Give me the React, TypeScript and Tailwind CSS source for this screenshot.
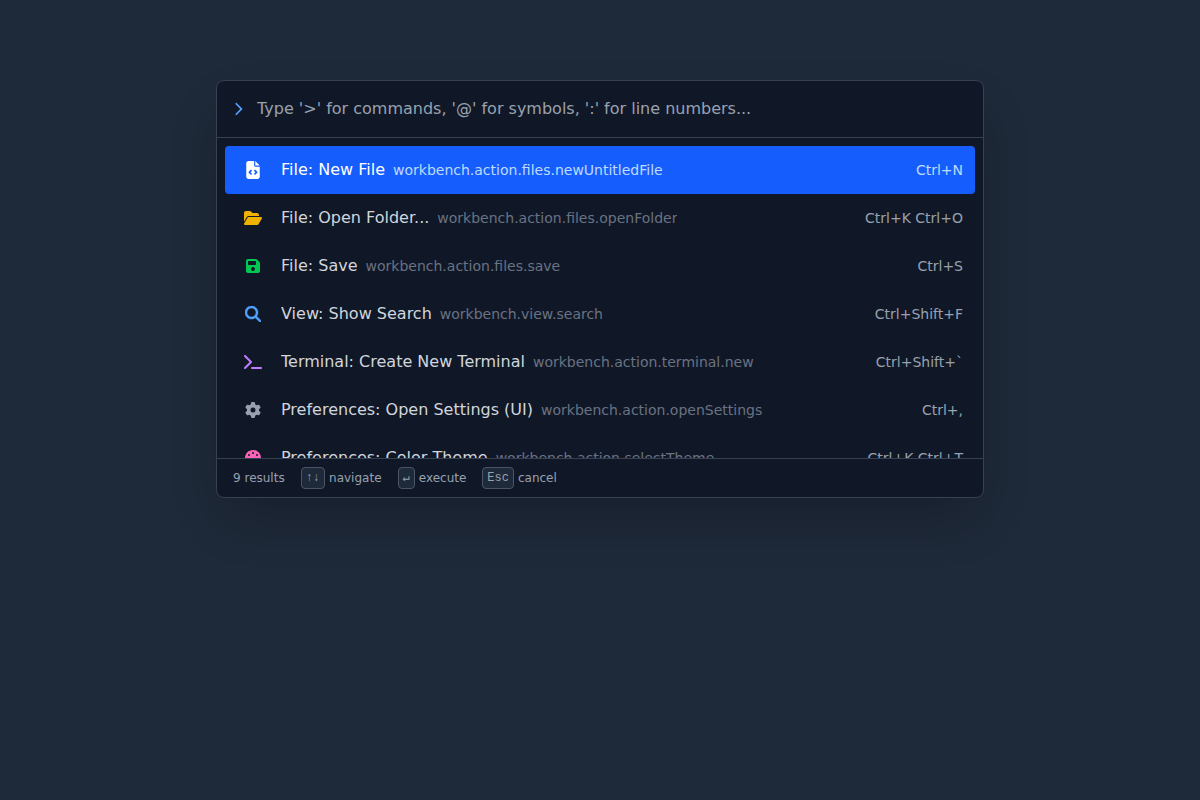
import { useState } from "react"
import type { IconType } from "react-icons"
import {
  FaBug,
  FaChevronRight,
  FaCodeBranch,
  FaFileCode,
  FaFloppyDisk,
  FaFolderOpen,
  FaGear,
  FaMagnifyingGlass,
  FaPalette,
  FaTerminal,
} from "react-icons/fa6"

interface Command {
  id: string
  title: string
  shortcut: string
  icon: IconType
  iconSize: string
  color: string
}

const commands: Command[] = [
  { id: "workbench.action.files.newUntitledFile", title: "File: New File", shortcut: "Ctrl+N", icon: FaFileCode, iconSize: "size-[18px]", color: "text-blue-400" },
  { id: "workbench.action.files.openFolder", title: "File: Open Folder...", shortcut: "Ctrl+K Ctrl+O", icon: FaFolderOpen, iconSize: "size-[18px]", color: "text-yellow-500" },
  { id: "workbench.action.files.save", title: "File: Save", shortcut: "Ctrl+S", icon: FaFloppyDisk, iconSize: "size-4", color: "text-green-500" },
  { id: "workbench.view.search", title: "View: Show Search", shortcut: "Ctrl+Shift+F", icon: FaMagnifyingGlass, iconSize: "size-4 stroke-[14]", color: "text-blue-400" },
  { id: "workbench.action.terminal.new", title: "Terminal: Create New Terminal", shortcut: "Ctrl+Shift+`", icon: FaTerminal, iconSize: "size-[18px]", color: "text-purple-400" },
  { id: "workbench.action.openSettings", title: "Preferences: Open Settings (UI)", shortcut: "Ctrl+,", icon: FaGear, iconSize: "size-4", color: "text-gray-400" },
  { id: "workbench.action.selectTheme", title: "Preferences: Color Theme", shortcut: "Ctrl+K Ctrl+T", icon: FaPalette, iconSize: "size-4", color: "text-pink-400" },
  { id: "workbench.view.scm", title: "View: Show Source Control", shortcut: "Ctrl+Shift+G", icon: FaCodeBranch, iconSize: "size-4", color: "text-orange-400" },
  { id: "workbench.action.debug.start", title: "Debug: Start Debugging", shortcut: "F5", icon: FaBug, iconSize: "size-4", color: "text-red-400" },
]

const hints = [
  { keys: "↑↓", label: "navigate" },
  { keys: "↵", label: "execute" },
  { keys: "Esc", label: "cancel" },
]

export default function App() {
  const [query, setQuery] = useState("")
  const [selected, setSelected] = useState(0)

  const search = query.replace(/^>/, "").trim().toLowerCase()
  const results = commands.filter((c) => c.title.toLowerCase().includes(search))

  const handleKeyDown = (e: React.KeyboardEvent) => {
    if (e.key === "ArrowDown") setSelected((i) => Math.min(i + 1, results.length - 1))
    if (e.key === "ArrowUp") setSelected((i) => Math.max(i - 1, 0))
    if (e.key === "Escape") setQuery("")
  }

  return (
    <div className="flex min-h-screen items-start justify-center bg-gray-800 px-4 pt-20 font-['DejaVu_Sans',sans-serif]">
      <div
        className="w-full max-w-3xl overflow-hidden rounded-lg border border-gray-700 bg-gray-900 shadow-2xl"
        onKeyDown={handleKeyDown}
      >
        <div className="flex items-center gap-3.5 border-b border-gray-700 p-4">
          <FaChevronRight className="h-[14px] w-2.5 shrink-0 text-blue-400" />
          <input
            type="text"
            aria-label="Command"
            value={query}
            onChange={(e) => {
              setQuery(e.target.value)
              setSelected(0)
            }}
            placeholder="Type '>' for commands, '@' for symbols, ':' for line numbers..."
            className="h-6 min-w-0 flex-1 bg-transparent text-base text-gray-200 placeholder-gray-400 outline-none"
          />
        </div>

        <ul className="max-h-80 overflow-y-auto p-2 [scrollbar-width:none]">
          {results.map(({ id, title, shortcut, icon: Icon, iconSize, color }, i) => {
            const active = i === selected
            return (
              <li key={id}>
                <button
                  type="button"
                  onClick={() => setSelected(i)}
                  className={`flex h-12 w-full items-center gap-3 rounded-sm px-3 text-left ${active ? "bg-blue-600" : ""}`}
                >
                  <span className={`flex w-8 shrink-0 justify-center ${active ? "text-white" : color}`}>
                    <Icon className={iconSize} />
                  </span>
                  <span className="flex min-w-0 flex-1 items-center gap-2">
                    <span className={`truncate ${active ? "text-white" : "text-gray-300"}`}>{title}</span>
                    <span className={`truncate text-sm ${active ? "text-blue-200" : "text-gray-500"}`}>{id}</span>
                  </span>
                  <span className={`shrink-0 text-sm ${active ? "text-blue-200" : "text-gray-400"}`}>{shortcut}</span>
                </button>
              </li>
            )
          })}
        </ul>

        <div className="flex items-center gap-4 border-t border-gray-700 px-4 py-2 text-xs text-gray-400">
          <span>{results.length} results</span>
          {hints.map((hint) => (
            <span key={hint.label} className="flex items-center gap-1">
              <kbd className="rounded border border-gray-600 bg-gray-800 px-1 py-0.5 font-['Liberation_Mono',monospace]">
                {hint.keys}
              </kbd>
              {hint.label}
            </span>
          ))}
        </div>
      </div>
    </div>
  )
}
